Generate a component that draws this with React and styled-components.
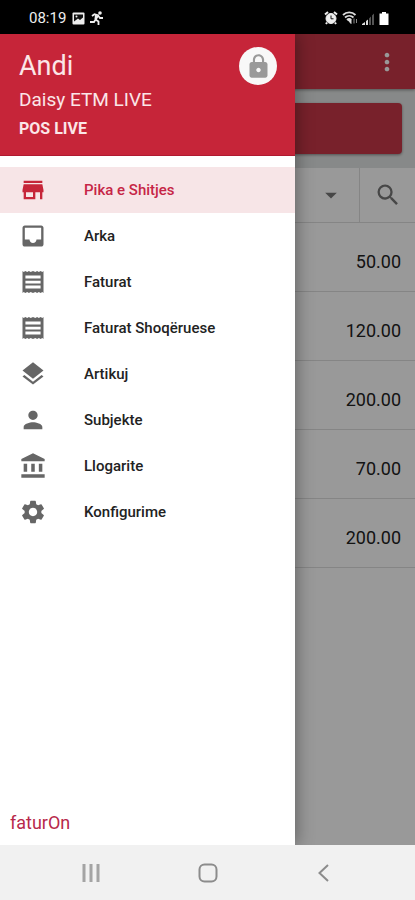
import React, { useState } from "react";
import styled, { createGlobalStyle, css } from "styled-components";
import {
    MdAccountBalance,
    MdArrowDropDown,
    MdLayers,
    MdLock,
    MdMoreVert,
    MdPerson,
    MdSearch,
    MdSettings,
} from "react-icons/md";

const StoreIcon = () => (
    <svg width="28" height="28" viewBox="0 0 24 24" fill="currentColor">
        <path d="M20 4H4v2h16V4zm1 10v-2l-1-5H4l-1 5v2h1v6h10v-6h4v6h2v-6h1zm-9 4H6v-4h6v4z" />
    </svg>
);

const InboxIcon = () => (
    <svg width="28" height="28" viewBox="0 0 24 24" fill="currentColor">
        <path d="M19 3H4.990c-1.110 0-1.980.89-1.980 2L3 19c0 1.100.88 2 1.990 2H19c1.100 0 2-.9 2-2V5c0-1.110-.9-2-2-2zm0 12h-4c0 1.660-1.350 3-3 3s-3-1.340-3-3H4.990V5H19v10z" />
    </svg>
);

const ReceiptIcon = () => (
    <svg width="28" height="28" viewBox="0 0 24 24" fill="currentColor">
        <path
            fillRule="evenodd"
            d="M3 2.500l1 1 1.500-1 1.500 1 1.500-1 1.500 1 2-1 2 1 1.500-1 1.500 1 1.500-1 1.500 1 1-1v19l-1-1-1.500 1-1.500-1-1.500 1-1.500-1-2 1-2-1-1.500 1-1.500-1-1.500 1-1.500-1-1 1zM5.500 6.500v2.500h13V6.500zM5.500 11v2.200h13V11zM5.500 15v2.500h13V15z"
        />
    </svg>
);

const menu = [
    { label: "Pika e Shitjes", Icon: StoreIcon },
    { label: "Arka", Icon: InboxIcon },
    { label: "Faturat", Icon: ReceiptIcon },
    { label: "Faturat Shoqëruese", Icon: ReceiptIcon },
    { label: "Artikuj", Icon: MdLayers },
    { label: "Subjekte", Icon: MdPerson },
    { label: "Llogarite", Icon: MdAccountBalance },
    { label: "Konfigurime", Icon: MdSettings },
];

const prices = ["50.00", "120.00", "200.00", "70.00", "200.00"];

const StatusIcons = () => (
    <StatusGroup>
        <svg width="14" height="14" viewBox="0 0 14 14" fill="none" stroke="#eee">
            <circle cx="7" cy="7.500" r="5" fill="#eee" />
            <path d="M1 3.500L4 1M13 3.500L10 1M3 11.500l-1 1.500M11 11.500l1 1.500" strokeWidth="2" />
            <path d="M7 4.500v3.300h2.500" stroke="#111" />
        </svg>
        <svg width="16" height="14" viewBox="0 0 16 14" fill="none" stroke="#ddd">
            <path d="M1 4C4.500.500 10 .500 13.500 4M3 6.500c2.500-2.300 6-2.300 8.500 0M5 9c1.300-1.200 3-1.200 4.300 0" strokeWidth="1.800" />
            <path d="M6 9l3 3.500V9z" fill="#ddd" />
            <path d="M12 7.500v5M14.500 8v4" stroke="#888" />
        </svg>
        <svg width="13" height="13" viewBox="0 0 13 13">
            <path d="M0 13h3v-3l-3 2zM4 13h2V7.500L4 9z" fill="#ddd" />
            <path d="M7 13h2V4.500L7 6.500zM10 13h2V1.500l-2 2z" fill="#555" />
        </svg>
        <svg width="10" height="13" viewBox="0 0 10 13" fill="#fff">
            <path d="M3 0h4v1.500h2.500V13h-9V1.500H3z" />
        </svg>
    </StatusGroup>
);

const App = () => {
    const [selected, setSelected] = useState(0);

    return (
        <>
            <GlobalStyle />
            <Screen>
                <StatusBar>
                    <StatusGroup>
                        <Clock>08:19</Clock>
                        <svg width="13" height="13" viewBox="0 0 13 13">
                            <rect x="0.500" y="0.500" width="12" height="12" rx="1" fill="#eee" />
                            <path d="M2 2.500h9v3L8 8 6 6.500l-4 3z" fill="#111" />
                            <circle cx="4.500" cy="4.500" r="1" fill="#eee" />
                        </svg>
                        <svg width="15" height="15" viewBox="0 0 15 15" fill="none" stroke="#eee" strokeWidth="1.800">
                            <circle cx="11" cy="2" r="1.800" fill="#eee" stroke="none" />
                            <path d="M3 5l2.500-1.800 3.500 1L6.500 8.500M9 4.500l2 2.500h3M6.500 8.500l3 2V14M6.500 8.500L5 11H1" />
                            <path d="M6 3.500l3.500 1.500-2 4-2-1z" fill="#eee" stroke="none" />
                        </svg>
                    </StatusGroup>
                    <StatusIcons />
                </StatusBar>

                <Content>
                    <AppBar>
                        <IconButton aria-label="More options">
                            <MdMoreVert size={28} />
                        </IconButton>
                    </AppBar>
                    <ActionPanel>
                        <ActionButton aria-label="Total" />
                    </ActionPanel>
                    <FilterBar>
                        <FilterButton aria-label="Filter" $wide>
                            <MdArrowDropDown size={28} />
                        </FilterButton>
                        <FilterButton aria-label="Search">
                            <MdSearch size={28} />
                        </FilterButton>
                    </FilterBar>
                    <PriceList>
                        {prices.map((price, i) => (
                            <PriceRow key={i}>{price}</PriceRow>
                        ))}
                    </PriceList>

                    <Scrim />
                    <Drawer>
                        <DrawerHeader>
                            <div>
                                <UserName>Andi</UserName>
                                <Company>Daisy ETM LIVE</Company>
                                <PosName>POS LIVE</PosName>
                            </div>
                            <LockButton aria-label="Lock">
                                <MdLock size={27} />
                            </LockButton>
                        </DrawerHeader>
                        <Menu>
                            {menu.map(({ label, Icon }, i) => (
                                <MenuItem key={label} $active={i === selected} onClick={() => setSelected(i)}>
                                    <Icon size={28} />
                                    <span>{label}</span>
                                </MenuItem>
                            ))}
                        </Menu>
                        <Brand>faturOn</Brand>
                    </Drawer>
                </Content>

                <NavBar>
                    <NavButton aria-label="Recent apps">
                        <svg width="20" height="20" viewBox="0 0 20 20" stroke="#a4a4a4" strokeWidth="3">
                            <path d="M3 1v18M10 1v18M17 1v18" />
                        </svg>
                    </NavButton>
                    <NavButton aria-label="Home">
                        <svg width="20" height="20" viewBox="0 0 20 20" fill="none" stroke="#8c8c8c" strokeWidth="2">
                            <rect x="1.500" y="1.500" width="17" height="17" rx="5" />
                        </svg>
                    </NavButton>
                    <NavButton aria-label="Back">
                        <svg width="20" height="20" viewBox="0 0 20 20" fill="none" stroke="#8c8c8c" strokeWidth="2">
                            <path d="M14 2L5.500 10l8.500 8" />
                        </svg>
                    </NavButton>
                </NavBar>
            </Screen>
        </>
    );
};

const GlobalStyle = createGlobalStyle`
    * {
        box-sizing: border-box;
    }

    body {
        margin: 0;
        font-family: Roboto, sans-serif;
        color: #222;
    }

    :where(button) {
        padding: 0;
        border: 0;
        background: none;
        font: inherit;
        color: inherit;
        cursor: pointer;
    }

    :where(svg) {
        display: block;
        flex-shrink: 0;
    }
`;

const Screen = styled.div`
    display: flex;
    flex-direction: column;
    min-height: 100vh;
`;

const StatusBar = styled.header`
    display: flex;
    justify-content: space-between;
    align-items: center;
    height: 34px;
    padding: 2px 26px 0 29px;
    background: #000;
    color: #eee;
`;

const StatusGroup = styled.div`
    display: flex;
    align-items: center;
    gap: 4px;
`;

const Clock = styled.span`
    margin-right: 2px;
    font-size: 15px;
`;

const Content = styled.main`
    position: relative;
    display: flex;
    flex-direction: column;
    flex: 1;
    background: #fff;
`;

const AppBar = styled.div`
    display: flex;
    justify-content: flex-end;
    align-items: center;
    height: 55px;
    padding-right: 14px;
    background: #c93848;
    box-shadow: 0 1px 3px rgba(0, 0, 0, 0.4);
    color: #fff;
    z-index: 0;
`;

const IconButton = styled.button`
    display: flex;
`;

const ActionPanel = styled.div`
    padding: 14px 13px;
    background: #e2e5e4;
`;

const ActionButton = styled.button`
    display: block;
    width: 100%;
    height: 51px;
    border-radius: 4px;
    background: #c93848;
    box-shadow: 0 1px 3px rgba(0, 0, 0, 0.4);
`;

const FilterBar = styled.div`
    display: flex;
    justify-content: flex-end;
    height: 55px;
    border-bottom: 1px solid #dedede;
    color: #777;
`;

const FilterButton = styled.button`
    display: flex;
    justify-content: center;
    align-items: center;
    width: 55px;

    ${({ $wide }) => $wide && css`
        flex: 1;
        justify-content: flex-end;
        padding-right: 14px;
        border-right: 1px solid #dedede;
    `}
`;

const PriceList = styled.ul`
    margin: 0;
    padding: 0;
    list-style: none;
`;

const PriceRow = styled.li`
    display: flex;
    justify-content: flex-end;
    align-items: center;
    height: 69px;
    padding: 8px 14px 0 0;
    border-bottom: 1px solid #dedede;
    font-size: 18px;
`;

const Scrim = styled.div`
    position: absolute;
    inset: 0;
    background: rgba(0, 0, 0, 0.4);
`;

const Drawer = styled.aside`
    position: absolute;
    inset: 0 120px 0 0;
    display: flex;
    flex-direction: column;
    background: #fff;
    box-shadow: 2px 0 16px rgba(0, 0, 0, 0.35);
    clip-path: inset(0 -30px 0 0);
`;

const DrawerHeader = styled.div`
    display: flex;
    justify-content: space-between;
    align-items: flex-start;
    height: 122px;
    padding: 13px 18px 0 19px;
    border-bottom: 1px solid #b01a30;
    background: #c62539;
    color: #fbe6e8;
`;

const UserName = styled.h1`
    margin: 0;
    font-size: 27px;
    font-weight: 400;
    line-height: 38px;
`;

const Company = styled.p`
    margin: 0;
    font-size: 19px;
    line-height: 30px;
`;

const PosName = styled.p`
    margin: 0;
    font-size: 16px;
    font-weight: 700;
    line-height: 28px;
`;

const LockButton = styled.button`
    display: flex;
    justify-content: center;
    align-items: center;
    width: 38px;
    height: 38px;
    border-radius: 50%;
    background: #f8f8f8;
    color: #999;
`;

const Menu = styled.nav`
    display: flex;
    flex-direction: column;
    padding-top: 11px;
`;

const MenuItem = styled.button`
    display: flex;
    align-items: center;
    gap: 37px;
    height: 46px;
    padding-left: 19px;
    font-size: 15px;
    font-weight: 500;

    svg {
        color: #666;
    }

    ${({ $active }) => $active && css`
        background: #f7e5e7;
        color: #c62546;

        svg {
            color: #c62539;
        }
    `}
`;

const Brand = styled.footer`
    margin-top: auto;
    padding: 0 10px 10px;
    color: #b8284a;
    font-size: 18px;
    line-height: 24px;
`;

const NavBar = styled.footer`
    display: flex;
    justify-content: space-between;
    align-items: center;
    height: 55px;
    padding: 0 81px;
    background: #f1f1f1;
`;

const NavButton = styled.button`
    display: flex;
`;

export default App;
